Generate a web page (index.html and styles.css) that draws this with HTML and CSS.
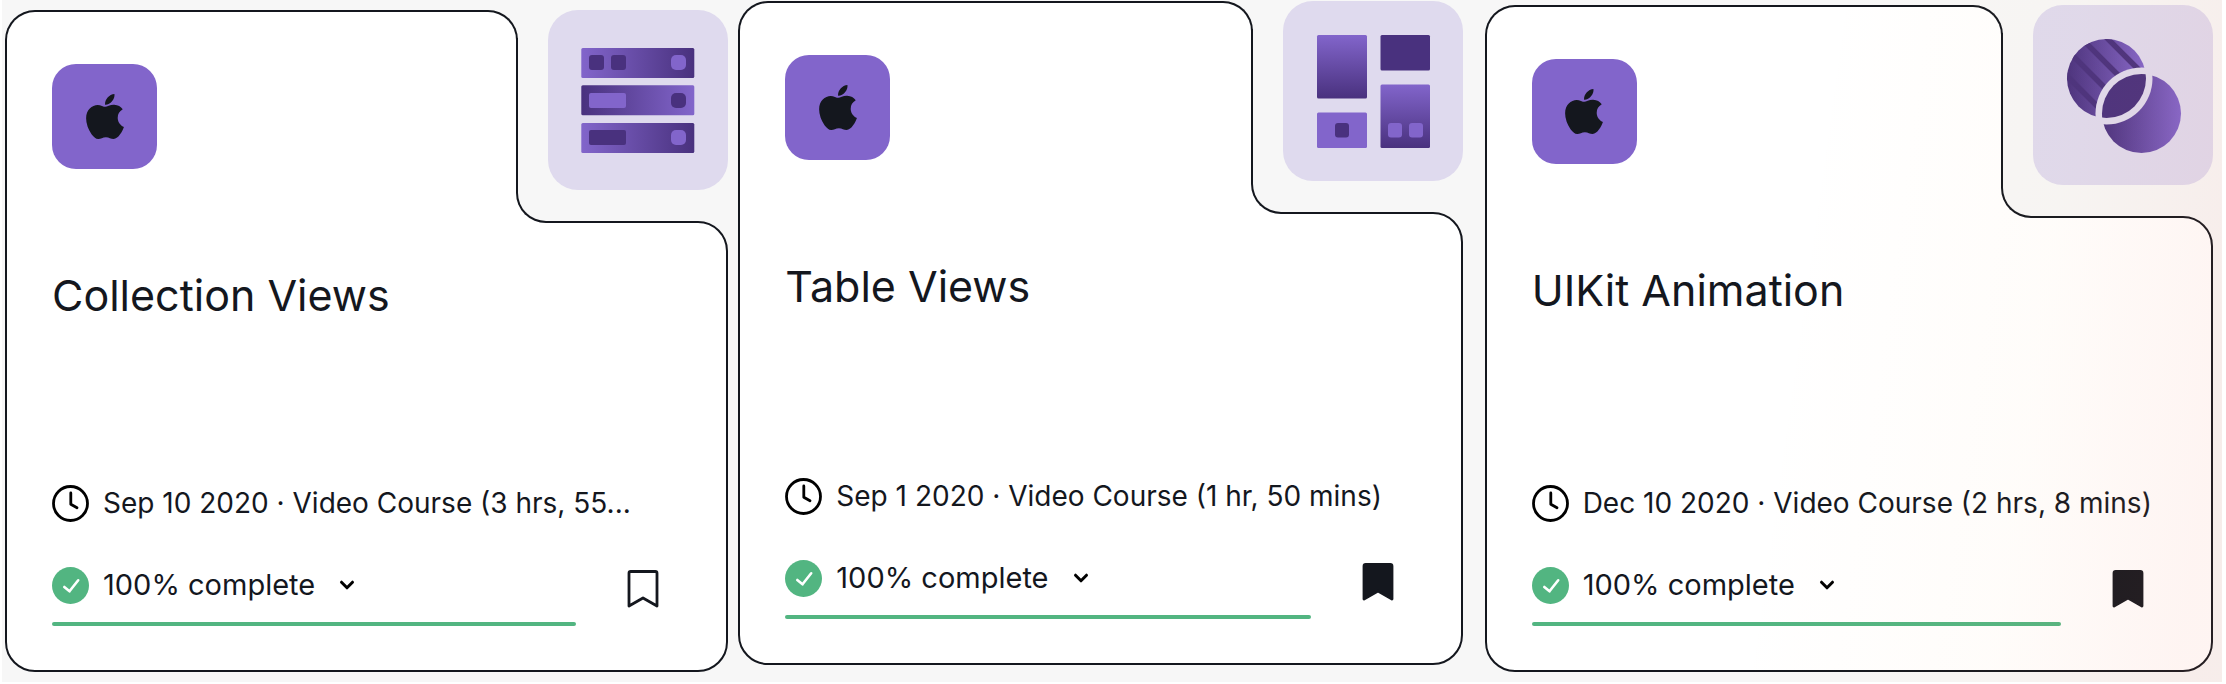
FILE: index.html
```html
<!DOCTYPE html>
<html lang="en">
<head>
<meta charset="utf-8">
<meta name="viewport" content="width=device-width, initial-scale=1">
<title>Courses</title>
<link rel="stylesheet" href="styles.css">
</head>
<body>
<svg class="defs" width="0" height="0" aria-hidden="true">
  <defs>
    <symbol id="apple" viewBox="4 32 376 448"><path d="M318.7 268.7c-.2-36.7 16.4-64.4 50-84.8-18.8-26.9-47.2-41.7-84.7-44.6-35.5-2.8-74.3 20.7-88.5 20.7-15 0-49.4-19.7-76.4-19.7C63.3 141.2 4 184.8 4 273.5q0 39.3 14.4 81.2c12.8 36.7 59 126.7 107.2 125.2 25.2-.6 43-17.9 75.8-17.9 31.8 0 48.3 17.9 76.4 17.9 48.6-.7 90.4-82.5 102.6-119.3-65.2-30.7-61.7-90-61.7-91.9zm-56.6-164.2c27.3-32.4 24.8-61.9 24-72.5-24.1 1.4-52 16.4-67.9 34.9-17.5 19.8-27.8 44.3-25.6 71.9 26.1 2 49.9-11.4 69.5-34.2z"/></symbol>
    <symbol id="clock" viewBox="0 0 37 37"><circle cx="18.500" cy="18.500" r="17" fill="none" stroke="#000" stroke-width="2.800"/><path d="M18.800 8v11.200l6.200 3.600" fill="none" stroke="#000" stroke-width="2.800" stroke-linecap="round" stroke-linejoin="round"/></symbol>
    <symbol id="check" viewBox="0 0 37 37"><circle cx="18.500" cy="18.500" r="18.500" fill="#52b581"/><path d="M12.300 20l5.200 4.300 8.700-11" fill="none" stroke="#fff" stroke-width="2.600" stroke-linecap="round" stroke-linejoin="round"/></symbol>
    <symbol id="chevron" viewBox="0 0 16 10"><path d="M2.500 2.200L8 7.800l5.500-5.600" fill="none" stroke="#000" stroke-width="3" stroke-linecap="round" stroke-linejoin="round"/></symbol>
    <symbol id="bookmark" viewBox="0 0 32 38"><path d="M2 3.200Q2 1.500 3.700 1.500h24.600Q30 1.500 30 3.200V36L16 28 2 36z" stroke="#14171e" stroke-width="2.800" stroke-linejoin="round"/></symbol>
    <linearGradient id="light-dark"><stop stop-color="#8265cb"/><stop offset="1" stop-color="#49317e"/></linearGradient>
    <linearGradient id="dark-light"><stop stop-color="#49317e"/><stop offset="1" stop-color="#8265cb"/></linearGradient>
    <linearGradient id="down" x2="0" y2="1"><stop stop-color="#8265cb"/><stop offset="1" stop-color="#49317e"/></linearGradient>
    <mask id="cut-a"><rect width="180" height="180" fill="#fff"/><circle cx="108.500" cy="108.500" r="46"/></mask>
    <mask id="cut-b"><rect width="180" height="180" fill="#fff"/><circle cx="73.500" cy="73.500" r="46"/></mask>
    <clipPath id="disc"><circle cx="73.500" cy="73.500" r="39.500"/></clipPath>
  </defs>
</svg>

<main class="courses">
  <article class="card card-low">
    <div class="head"><span class="platform"><svg class="apple"><use href="#apple"/></svg></span></div>
    <div class="notch"><div class="notch-edge"></div></div>
    <svg class="thumb" viewBox="0 0 180 180" aria-hidden="true">
      <rect x="33.300" y="38" width="113" height="30" rx="1.500" fill="url(#light-dark)"/>
      <rect x="33.300" y="75.300" width="113" height="30" rx="1.500" fill="url(#dark-light)"/>
      <rect x="33.300" y="113" width="113" height="30" rx="1.500" fill="url(#light-dark)"/>
      <g fill="#49317e">
        <rect x="41" y="45" width="15" height="15" rx="3"/>
        <rect x="63" y="45" width="15" height="15" rx="3"/>
        <rect x="123" y="83" width="15" height="15" rx="5"/>
        <rect x="41" y="120" width="37" height="15" rx="2"/>
      </g>
      <g fill="#8265cb">
        <rect x="123" y="45" width="15" height="15" rx="5"/>
        <rect x="41" y="83" width="37" height="15" rx="2"/>
        <rect x="123" y="120" width="15" height="15" rx="5"/>
      </g>
    </svg>
    <div class="body">
      <h2 class="title">Collection Views</h2>
      <div class="meta"><svg class="icon"><use href="#clock"/></svg><span>Sep 10 2020 · Video Course (3 hrs, 55...</span></div>
      <div class="foot">
        <div class="progress">
          <button class="status" type="button"><svg class="icon"><use href="#check"/></svg><span>100% complete</span><svg class="chevron"><use href="#chevron"/></svg></button>
          <div class="bar" role="progressbar" aria-label="Progress" aria-valuenow="100"></div>
        </div>
        <button class="save" type="button" aria-label="Bookmark"><svg class="bookmark"><use href="#bookmark"/></svg></button>
      </div>
    </div>
  </article>

  <article class="card card-high">
    <div class="head"><span class="platform"><svg class="apple"><use href="#apple"/></svg></span></div>
    <div class="notch"><div class="notch-edge"></div></div>
    <svg class="thumb" viewBox="0 0 180 180" aria-hidden="true">
      <rect x="34" y="34" width="50" height="63.500" rx="1.500" fill="url(#down)"/>
      <rect x="97.500" y="34" width="49.500" height="35.500" rx="1.500" fill="#49317e"/>
      <rect x="34" y="111.500" width="50" height="35.500" rx="1.500" fill="#8265cb"/>
      <rect x="97.500" y="83.500" width="49.500" height="63.500" rx="1.500" fill="url(#down)"/>
      <rect x="52" y="122" width="14" height="14.500" rx="3" fill="#49317e"/>
      <rect x="105" y="122" width="14" height="14.500" rx="3" fill="#8265cb"/>
      <rect x="126" y="122" width="14" height="14.500" rx="3" fill="#8265cb"/>
    </svg>
    <div class="body">
      <h2 class="title">Table Views</h2>
      <div class="meta"><svg class="icon"><use href="#clock"/></svg><span>Sep 1 2020 · Video Course (1 hr, 50 mins)</span></div>
      <div class="foot">
        <div class="progress">
          <button class="status" type="button"><svg class="icon"><use href="#check"/></svg><span>100% complete</span><svg class="chevron"><use href="#chevron"/></svg></button>
          <div class="bar" role="progressbar" aria-label="Progress" aria-valuenow="100"></div>
        </div>
        <button class="save saved" type="button" aria-label="Remove bookmark"><svg class="bookmark"><use href="#bookmark"/></svg></button>
      </div>
    </div>
  </article>

  <article class="card card-mid">
    <div class="head"><span class="platform"><svg class="apple"><use href="#apple"/></svg></span></div>
    <div class="notch"><div class="notch-edge"></div></div>
    <svg class="thumb" viewBox="0 0 180 180" aria-hidden="true">
      <g mask="url(#cut-a)">
        <circle cx="73.500" cy="73.500" r="39.500" fill="url(#dark-light)"/>
        <path clip-path="url(#disc)" d="M60 19l60 60M30 15l80 80M20 31l80 80M20 57l70 70" stroke="#49317e" stroke-width="5.500"/>
      </g>
      <circle cx="108.500" cy="108.500" r="39.500" fill="url(#dark-light)" mask="url(#cut-b)"/>
      <circle cx="108.500" cy="108.500" r="39.500" fill="#49317e" clip-path="url(#disc)"/>
    </svg>
    <div class="body">
      <h2 class="title">UIKit Animation</h2>
      <div class="meta"><svg class="icon"><use href="#clock"/></svg><span>Dec 10 2020 · Video Course (2 hrs, 8 mins)</span></div>
      <div class="foot">
        <div class="progress">
          <button class="status" type="button"><svg class="icon"><use href="#check"/></svg><span>100% complete</span><svg class="chevron"><use href="#chevron"/></svg></button>
          <div class="bar" role="progressbar" aria-label="Progress" aria-valuenow="100"></div>
        </div>
        <button class="save saved" type="button" aria-label="Remove bookmark"><svg class="bookmark"><use href="#bookmark"/></svg></button>
      </div>
    </div>
  </article>
</main>
</body>
</html>
```

FILE: styles.css
```css
* { box-sizing: border-box; }

body {
  margin: 0;
  min-height: 100vh;
  display: flex;
  padding: 0 4px 2px 2px;
  background: #fff;
  color: #14171e;
  font-family: Inter, "Liberation Sans", sans-serif;
}

.defs { position: absolute; }

.courses {
  position: relative;
  flex: 1;
  display: grid;
  grid-template-columns: 723fr 734fr 750fr;
  padding: 0 9px 0 3px;
  background: #f7f7f7;
}

/* warm glow that falls over the right side of the page */
.courses::after {
  content: "";
  position: absolute;
  inset: 0;
  z-index: 3;
  pointer-events: none;
  background: linear-gradient(98deg, transparent 79%, rgba(250, 170, 90, .03) 90%, rgba(245, 120, 90, .08) 98%);
}

.card {
  display: grid;
  grid-template-columns: 1fr 210px;
  grid-template-rows: 211px 1fr;
}

.card-low { margin: 10px 0 10px 0; }
.card-high { margin: 1px 0 17px 10px; }
.card-mid { margin: 5px 0 10px 22px; }

.head {
  grid-area: 1 / 1;
  z-index: 1;
  margin-bottom: -2px;
  padding: 52px 45px;
  border: 2px solid #14171e;
  border-bottom: 0;
  border-radius: 30px 30px 0 0;
  background: #fff;
}

/* fills the outside of the notch's inner curve with the card's white */
.notch {
  grid-area: 1 / 2;
  z-index: 1;
  display: flex;
  margin: 28px 30px -2px -2px;
  background: linear-gradient(#fff, #fff) left bottom / 30px 30px no-repeat;
}

.notch-edge {
  flex: 1;
  border: solid #14171e;
  border-width: 0 0 2px 2px;
  border-bottom-left-radius: 30px;
  background: #f7f7f7;
}

.thumb {
  grid-area: 1 / 2;
  z-index: 2;
  justify-self: end;
  width: 180px;
  height: 180px;
  border-radius: 30px;
  background: #dfdaee;
}

.body {
  grid-area: 2 / 1 / auto / span 2;
  display: flex;
  flex-direction: column;
  padding: 45px 0 44px 45px;
  border: 2px solid #14171e;
  border-radius: 0 30px 30px 30px;
  background: #fff;
}

.platform {
  display: grid;
  place-items: center;
  width: 105px;
  height: 105px;
  border-radius: 24px;
  background: #8265cb;
}

.apple { width: 38px; height: 45px; fill: #14171e; }

.title {
  margin: 0 0 auto;
  font-size: 43px;
  line-height: 54px;
  font-weight: 400;
}

.meta, .status {
  display: flex;
  align-items: center;
  line-height: 38px;
  white-space: nowrap;
}

.meta { gap: 14px; margin-bottom: 44px; font-size: 28px; }

.icon { flex: none; width: 37px; height: 37px; }

.foot {
  display: flex;
  align-items: flex-start;
  gap: 51px;
  padding-right: 67px;
}

.progress { flex: 1; }

.status, .save {
  padding: 0;
  border: 0;
  background: none;
  color: inherit;
  font-family: inherit;
  cursor: pointer;
}

.status { gap: 14px; font-size: 29px; }

.chevron { width: 16px; height: 10px; margin-left: 10px; }

.bar {
  height: 4px;
  margin-top: 18px;
  border-radius: 2px;
  background: #52b581;
}

.save { padding-top: 4px; }

.bookmark { display: block; width: 32px; height: 38px; fill: none; }

.saved .bookmark { fill: #14171e; }
```
